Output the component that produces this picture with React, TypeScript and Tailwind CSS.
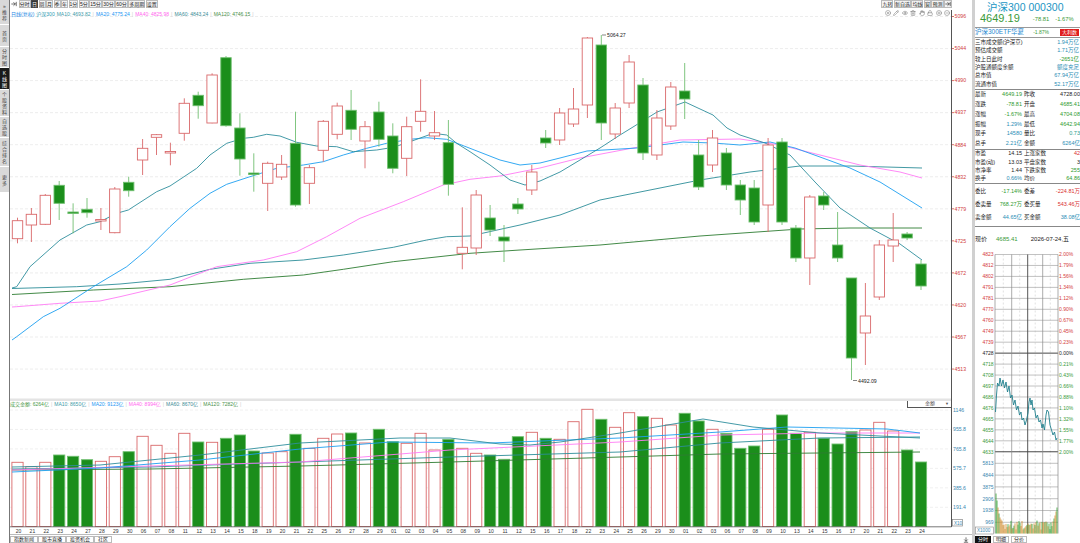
import { CircleX, Pencil, Eye, Trash2, Hand, Lock, CirclePlus, CircleMinus, ArrowRightToLine, ArrowUpToLine } from "lucide-react";

// [bodyTop, bodyBottom, high, low, up]
type Candle = [number, number, number, number, number];

const CANDLES: Candle[] = [
  [220.7, 238.7, 217.7, 243.3, 1], [214.3, 225, 208, 242, 1], [195.3, 224.3, 194, 225, 1],
  [185.3, 203.3, 181, 220, 0], [212, 213.5, 203.3, 233.3, 0], [209.3, 212.7, 198, 217.7, 0],
  [219.5, 221, 208, 230, 1], [189, 232.7, 187, 233.3, 1], [182.3, 190.7, 176.7, 196.7, 0],
  [148.3, 160, 139, 175, 1], [134.7, 137.3, 134, 155, 1], [151.5, 153, 142.7, 165.3, 1],
  [103.3, 133.3, 98.3, 140.7, 1], [95.3, 105.7, 91.7, 118.7, 0], [75, 123, 73.3, 123.3, 1],
  [57.7, 125.7, 56, 126.7, 0], [128, 159, 113.3, 175.7, 0], [173, 174.5, 153.3, 191.7, 0],
  [163.3, 183.3, 161.7, 211, 1], [164.3, 177, 155, 180, 1], [143.3, 205, 111.7, 206.7, 0],
  [167.7, 183.3, 165, 204, 1], [121.3, 150.3, 120, 161.7, 1], [106, 134.3, 102.7, 139.3, 1],
  [110.3, 129.3, 90, 140, 0], [126.7, 141, 121, 168.3, 1], [112, 139.3, 101.7, 146.7, 0],
  [136, 168.3, 123.3, 173.3, 0], [126.7, 158.3, 116.7, 176, 1], [111.3, 121.3, 79.3, 131.7, 1],
  [132.7, 136, 111, 140, 1], [142.7, 184.3, 120, 195.7, 0], [247.3, 253.3, 207.3, 269.3, 1],
  [195, 248, 190, 255, 1], [218, 230, 205, 236, 0], [237, 241, 225, 262, 0],
  [204, 209, 198, 214, 0], [172, 190, 165, 195, 1], [138, 143, 130, 148, 0],
  [113, 140, 108, 145, 1], [109, 124, 88, 127, 1], [38, 105, 37, 118, 1],
  [45, 123, 35, 140, 0], [108, 134, 103, 139, 1], [62, 103, 55, 108, 1],
  [85, 153, 78, 160, 0], [118, 155, 110, 160, 1], [87, 126, 82, 130, 1],
  [91, 99, 63, 119, 0], [155, 187, 140, 190, 0], [138, 165, 130, 172, 1],
  [153, 185, 148, 190, 0], [185, 200, 180, 215, 0], [188, 222, 180, 225, 0],
  [145, 205, 138, 232, 1], [142, 222, 138, 225, 0], [228, 258, 225, 262, 0],
  [197, 258, 195, 285, 1], [196, 205, 192, 210, 0], [245, 258, 212, 262, 0],
  [278, 358, 278, 380, 0], [316, 333, 283, 365, 1], [245, 297, 240, 300, 1],
  [240, 246, 213, 262, 1], [234, 238, 232, 240, 0], [264, 286, 260, 290, 0],
];

const VOL = [
  462.3, 466.7, 462.3, 455, 456.3, 459.7, 461.3, 456.7, 451.7, 436.3,
  445.3, 453.3, 433.3, 442, 442.3, 438.3, 435, 451, 453, 451.7,
  434.3, 448.3, 438.3, 434, 433, 443, 429.3, 441.7, 443.3, 433.3,
  450, 439.3, 448.3, 453.3, 455, 459.3, 436.7, 432.3, 438.3, 439.3,
  421.7, 409.3, 419.3, 427.3, 412.7, 416.7, 418.3, 425, 413.3, 421,
  429.3, 433.3, 448.3, 446, 429.3, 415, 433.3, 432.3, 438.3, 444,
  431.7, 430, 422.3, 431, 450, 462,
];

const DATES =
  "20 21 22 23 24 27 28 29 30 06 07 08 11 12 13 14 15 18 19 20 21 22 25 26 27 28 29 01 02 03 04 05 08 09 10 11 12 15 16 17 18 22 23 24 25 26 29 30 01 02 03 06 07 08 09 10 13 14 15 16 17 20 21 22 23 24".split(" ");

const PRICES = ["5096", "5044", "4990", "4937", "4884", "4832", "4779", "4725", "4672", "4620", "4567", "4513"];
const VOL_AXIS = ["1146", "955.8", "765.8", "575.7", "385.6", "191.4"];

const MA10 = [[12,288],[16.7,286.7],[30,266.7],[60,240],[86.7,225],[100,221.7],[116.7,213.3],[128.3,210],[156.7,191.7],[170,186],[196.7,168.3],[210,155],[226.7,143.3],[243.3,138.3],[253.3,137.3],[266.7,134.3],[280,136],[296.7,142.3],[316.7,146],[336.7,146.7],[353.3,151.7],[376.7,150],[393.3,147.3],[410,141.7],[433.3,133.3],[446.7,135],[456.7,143.3],[470,151.7],[490,165],[510,180],[525,185],[540,181],[560,172],[580,160],[600,148],[620,135],[633,127],[657,112],[685,102],[713,115],[727,128],[740,135],[765,143],[790,155],[815,182],[840,208],[870,228],[900,244],[922,260]];
const MA20 = [[12,340],[16.7,336.7],[43.3,316.7],[60,308.3],[93.3,286.7],[126.7,266.7],[146.7,250],[170,226.7],[190,208.3],[210,193.3],[226.7,184.3],[250,176.7],[276.7,168.3],[303.3,165],[323.3,161.7],[343.3,155],[366.7,148.3],[386.7,143.3],[410,139.3],[426.7,137.7],[446.7,139.3],[470,148.3],[500,160],[520,165],[540,163],[560,158],[587,151],[637,148],[683,142],[713,143],[740,145],[770,142],[795,148],[820,157],[850,168],[880,182],[922,208]];
const MA40 = [[12,307],[16.7,306.7],[60,303.3],[100,301],[120,296.7],[170,285],[216.7,266.7],[263.3,260],[296.7,251.7],[326.7,236.7],[360,218.3],[403.3,201.7],[443.3,185],[470,179.3],[500,176],[540,168],[580,158],[633,148],[680,140],[740,139],[780,145],[820,155],[860,165],[900,172],[922,178]];
const MA60 = [[12,288.5],[76.7,286.7],[120,284],[170,279.3],[210,269.3],[250,263.3],[303.3,260],[343.3,255],[393.3,247.3],[426.7,240],[446.7,236.7],[470,236],[520,225],[560,215],[600,200],[650,190],[700,180],[750,172],[800,166],[850,166],[922,168]];
const MA120 = [[12,294.5],[93.3,290],[170,286.7],[243.3,279.3],[303.3,275],[343.3,269.3],[393.3,261.7],[470,253.3],[520,250],[600,245],[700,236],[800,229],[850,228],[922,228]];

const VMA10 = [[12,467],[100,465],[200,455],[300,443],[400,438],[450,438],[500,444],[530,445],[560,442],[620,433],[703,419],[753,427],[820,433],[920,438]];
const VMA20 = [[12,472],[100,468],[200,460],[300,449],[390,442],[490,443],[620,438],[720,432],[787,427],[887,429],[920,433]];
const VMA40 = [[12,470],[150,466],[300,462],[450,450],[620,442],[720,435],[820,433],[920,433]];
const VMA60 = [[12,469],[150,467],[300,462],[450,457],[620,452],[720,443],[820,438],[920,437]];
const VMA120 = [[12,470],[150,469],[300,466],[450,462],[620,457],[720,454],[920,452]];

const MINI_LINE = [[995.5,412],[996.5,395],[997.5,383],[999,386],[1000,378],[1001.5,386],[1003,380],[1004.5,388],[1006,382],[1007.5,392],[1009,386],[1010.5,398],[1012,395],[1013.5,405],[1015,400],[1016.5,410],[1018,406],[1019.5,415],[1021,412],[1022,420],[1023.5,418],[1025,425],[1026.5,420],[1028,413],[1029,402],[1030,398],[1031,405],[1032,400],[1033,410],[1034.5,408],[1036,418],[1037.5,415],[1039,422],[1040.5,420],[1042,428],[1043,424],[1044.5,430],[1046,415],[1047,410],[1048.5,412],[1050,425],[1051.5,430],[1053,435],[1054.5,432],[1056,440],[1057,438]];

const MINI_L = ["4823","4812","4802","4791","4781","4770","4760","4749","4739","4728","4718","4708","4697","4686","4676","4665","4655","4644","4633"];
const MINI_R = ["2.00%","1.79%","1.56%","1.34%","1.12%","0.90%","0.67%","0.45%","0.23%","0.00%","0.21%","0.43%","0.66%","0.88%","1.10%","1.32%","1.55%","1.77%","2.00%"];
const MINI_V = ["5813", "4844", "3875", "2906", "1938", "969"];

const rnd = (i: number) => {
  const v = Math.sin(i * 91.17 + 7.3) * 10000;
  return v - Math.floor(v);
};

const MINI_VOL = Array.from({ length: 62 }, (_, i) => {
  let h: number;
  if (i < 6) h = [40, 33, 26, 20, 16, 14][i];
  else if (i > 56) h = [12, 15, 18, 22, 26][i - 57];
  else h = 4 + rnd(i) * 9;
  return { x: 996 + i, h, c: rnd(i + 100) > 0.5 ? "#2f9e2f" : "#d18b2c" };
});

const bx = (i: number) => 17.5 + i * 13.9;
const pts = (p: number[][]) => p.map((q) => q.join(",")).join(" ");

const RED = "#d9686a";
const GREEN = "#1b8e1b";

function Tab({ t, on }: { t: string; on?: boolean }) {
  return (
    <span
      className={
        on
          ? "flex h-[8px] items-center border border-[#444] bg-[#333] text-white"
          : "flex h-[8px] items-center border border-[#bbb] bg-[#f3f3f3] text-[#222]"
      }
    >
      {t}
    </span>
  );
}

const SIDE = [
  { t: "推荐", h: 25, pre: true },
  { t: "首页", h: 22 },
  { t: "分时图", h: 21 },
  { t: "K线图", h: 22, on: true },
  { t: "个股资料", h: 27 },
  { t: "自选股", h: 21 },
  { t: "综合排名", h: 29 },
  { t: "更多", h: 26 },
];

function Sidebar() {
  return (
    <div className="flex w-[10px] shrink-0 flex-col border-r border-[#777]">
      {SIDE.map((s) => (
        <div
          key={s.t}
          style={{ height: s.h }}
          className={
            s.on
              ? "flex flex-col items-center justify-center border-b border-white bg-[#1a1a1a] text-[5px] leading-[6px] text-white"
              : "flex flex-col items-center justify-center border-b border-white bg-[#d9d9d9] text-[5px] leading-[6px] text-[#444]"
          }
        >
          {s.pre && <span className="leading-[5px]">»</span>}
          {s.t.split("").map((c, i) => (
            <span key={i}>{c}</span>
          ))}
        </div>
      ))}
      <div className="flex-1 bg-white" />
    </div>
  );
}

function Sep() {
  return <span className="text-[#ccc]">|</span>;
}

function MainChart() {
  const grid = PRICES.map((_, k) => 16.5 + k * 32.05);
  const vgrid = VOL_AXIS.map((_, k) => 410 + k * 19.45);
  return (
    <svg width={962} height={526} viewBox="10 10 962 526" className="block">
      {grid.map((y) => (
        <line key={y} x1={10} x2={951} y1={y} y2={y} stroke="#e9e9e9" strokeDasharray="3 2" strokeWidth={0.8} />
      ))}
      {vgrid.map((y) => (
        <line key={y} x1={10} x2={951} y1={y} y2={y} stroke="#ececec" strokeDasharray="3 2" strokeWidth={0.8} />
      ))}
      {/* price axis */}
      {PRICES.map((p, k) => (
        <g key={p}>
          <line x1={951} x2={954} y1={grid[k]} y2={grid[k]} stroke="#d04848" strokeWidth={0.8} />
          <text x={954.5} y={grid[k] + 1.8} fontSize={5.2} fill="#d03c3c">
            {p}
          </text>
        </g>
      ))}
      {VOL_AXIS.map((p, k) => (
        <text key={p} x={953} y={vgrid[k] + 1.8} fontSize={5.2} fill="#3a88b0">
          {p}
        </text>
      ))}
      <rect x={952.5} y={519.5} width={10} height={6.5} fill="#fff" stroke="#888" strokeWidth={0.7} />
      <text x={954} y={524.5} fontSize={4.6} fill="#3a88b0">
        X10
      </text>

      {/* moving averages */}
      <polyline points={pts(MA60)} fill="none" stroke="#2d8d98" strokeWidth={0.9} />
      <polyline points={pts(MA120)} fill="none" stroke="#2e7d32" strokeWidth={0.9} />
      <polyline points={pts(MA40)} fill="none" stroke="#ff7cf5" strokeWidth={0.9} />
      <polyline points={pts(MA20)} fill="none" stroke="#1d9ff0" strokeWidth={0.9} />
      <polyline points={pts(MA10)} fill="none" stroke="#2f8f9d" strokeWidth={0.9} />

      {/* candles */}
      {CANDLES.map(([t, b, h, l, up], i) => {
        const x = bx(i);
        return (
          <g key={i}>
            <line x1={x} x2={x} y1={h} y2={l} stroke={up ? RED : "#72c072"} strokeWidth={0.9} />
            <rect
              x={x - 5.2}
              y={t}
              width={10.4}
              height={Math.max(b - t, 1.4)}
              fill={up ? "#fff" : GREEN}
              stroke={up ? RED : "#6fbf6f"}
              strokeWidth={0.9}
            />
          </g>
        );
      })}

      {/* extremes */}
      <line x1={602} x2={606} y1={35} y2={35} stroke="#333" strokeWidth={0.6} />
      <text x={607} y={37} fontSize={5.2} fill="#222">
        5064.27
      </text>
      <line x1={853} x2={857} y1={380.5} y2={380.5} stroke="#333" strokeWidth={0.6} />
      <text x={858} y={382.5} fontSize={5.2} fill="#222">
        4492.09
      </text>

      {/* divider between panes */}
      <rect x={10} y={398.5} width={941} height={2.5} fill="#e4e4e4" />

      {/* volume bars */}
      {VOL.map((top, i) => {
        const up = CANDLES[i][4];
        const x = bx(i);
        return (
          <rect
            key={i}
            x={x - 5.6}
            y={top}
            width={11.2}
            height={526.5 - top}
            fill={up ? "#fff" : GREEN}
            stroke={up ? RED : "#6fbf6f"}
            strokeWidth={0.9}
          />
        );
      })}
      <polyline points={pts(VMA120)} fill="none" stroke="#2e7d32" strokeWidth={0.9} />
      <polyline points={pts(VMA60)} fill="none" stroke="#2d8d98" strokeWidth={0.9} />
      <polyline points={pts(VMA40)} fill="none" stroke="#ff7cf5" strokeWidth={0.9} />
      <polyline points={pts(VMA20)} fill="none" stroke="#1d9ff0" strokeWidth={0.9} />
      <polyline points={pts(VMA10)} fill="none" stroke="#2f8f9d" strokeWidth={0.9} />

      {/* frame */}
      <line x1={951.5} x2={951.5} y1={10} y2={527} stroke="#555" strokeWidth={1} />
      <line x1={10} x2={951.5} y1={526.8} y2={526.8} stroke="#555" strokeWidth={0.8} />
      <line x1={10} x2={972} y1={534.5} y2={534.5} stroke="#bbb" strokeWidth={1} />

      {/* dates */}
      {DATES.map((d, i) => (
        <text key={i} x={bx(i) + 1} y={532.8} fontSize={5} fill="#333" textAnchor="middle">
          {d}
        </text>
      ))}
    </svg>
  );
}

function MiniChart() {
  const gy = MINI_L.map((_, k) => 254.5 + k * 10.96);
  const vy = MINI_V.map((_, k) => 463.3 + k * 11.8);
  const vx = [995, 1011.7, 1027.7, 1042.7, 1058];
  const minor = [1003.3, 1019.7, 1035.2, 1050.3];
  return (
    <svg width={105} height={284} viewBox="975 251 105 284" className="block">
      {minor.map((x) => (
        <line key={x} x1={x} x2={x} y1={254.5} y2={533.5} stroke="#ccc" strokeDasharray="2 2" strokeWidth={0.6} />
      ))}
      {gy.map((y, k) => (
        <line
          key={y}
          x1={995}
          x2={1058}
          y1={y}
          y2={y}
          stroke={k === 9 || k === 18 ? "#333" : "#a8a8a8"}
          strokeWidth={k === 9 || k === 18 ? 0.9 : 0.7}
        />
      ))}
      {vy.map((y) => (
        <line key={y} x1={995} x2={1058} y1={y} y2={y} stroke="#a8a8a8" strokeWidth={0.7} />
      ))}
      {vx.map((x, k) => (
        <line key={x} x1={x} x2={x} y1={254.5} y2={533.5} stroke={k === 2 ? "#444" : "#888"} strokeWidth={k === 2 ? 0.9 : 0.7} />
      ))}
      {MINI_L.map((p, k) => (
        <text
          key={k}
          x={993.5}
          y={gy[k] + 1.8}
          fontSize={5}
          textAnchor="end"
          fill={k < 9 ? "#d43c3c" : k === 9 ? "#222" : "#3a9a3a"}
        >
          {p}
        </text>
      ))}
      {MINI_R.map((p, k) => (
        <text key={k} x={1059} y={gy[k] + 1.8} fontSize={5} fill={k < 9 ? "#d43c3c" : k === 9 ? "#222" : "#3a9a3a"}>
          {p}
        </text>
      ))}
      {MINI_V.map((p, k) => (
        <text key={p} x={993.5} y={vy[k] + 1.8} fontSize={5} textAnchor="end" fill="#3a88b0">
          {p}
        </text>
      ))}
      <rect x={975.5} y={527} width={18} height={7} fill="#fff" stroke="#888" strokeWidth={0.6} />
      <text x={977} y={532.3} fontSize={4.6} fill="#3a88b0">
        X1000
      </text>
      {MINI_VOL.map((v) => (
        <line key={v.x} x1={v.x} x2={v.x} y1={533.5 - v.h} y2={533.5} stroke={v.c} strokeWidth={0.8} />
      ))}
      <polyline points={pts(MINI_LINE)} fill="none" stroke="#1f7f8c" strokeWidth={0.9} />
    </svg>
  );
}

type Cell = [string, string, string];

function Pair({ l, r, h }: { l: Cell; r: Cell; h: string }) {
  return (
    <div className={`flex ${h} items-center`}>
      <div className="flex w-[50px] justify-between">
        <span className="text-[#222]">{l[0]}</span>
        <span style={{ color: l[2] }}>{l[1]}</span>
      </div>
      <div className="flex w-[58px] shrink-0 justify-between pl-[2px]">
        <span className="text-[#222]">{r[0]}</span>
        <span style={{ color: r[2] }}>{r[1]}</span>
      </div>
    </div>
  );
}

const G = "#2e9a2e";
const R = "#d93030";
const B = "#2a8db5";
const K = "#222";

const INFO: [string, string, string][] = [
  ["三市成交额(沪深京)", "1.94万亿", B],
  ["预估成交额", "1.71万亿", B],
  ["较上日此时", "-2651亿", G],
  ["沪股通额度余额", "额度充足", B],
  ["总市值", "67.94万亿", B],
  ["流通市值", "52.17万亿", B],
];

const Q1: [Cell, Cell][] = [
  [["最新", "4649.19", G], ["昨收", "4728.00", K]],
  [["涨跌", "-78.81", G], ["开盘", "4685.41", G]],
  [["涨幅", "-1.67%", G], ["最高", "4704.08", G]],
  [["振幅", "1.29%", B], ["最低", "4642.94", G]],
  [["现手", "14580", B], ["量比", "0.73", "#2a9a8a"]],
  [["总手", "2.21亿", B], ["金额", "6264亿", B]],
];

const Q2: [Cell, Cell][] = [
  [["市盈", "14.15", K], ["上涨家数", "42", R]],
  [["市盈(动)", "13.03", K], ["平盘家数", "3", K]],
  [["市净率", "1.44", K], ["下跌家数", "255", G]],
  [["换手", "0.66%", B], ["均价", "64.86", G]],
];

const Q3: [Cell, Cell][] = [
  [["委比", "-17.14%", G], ["委差", "-224.81万", R]],
  [["委卖量", "768.27万", G], ["委买量", "543.46万", R]],
  [["卖金额", "44.65亿", B], ["买金额", "38.08亿", B]],
];

function RightPanel() {
  return (
    <div className="flex w-[108px] shrink-0 flex-col overflow-hidden border-l-[3px] border-[#d0d0d0] text-[5.5px] leading-none">
      <div className="flex h-[28px] flex-col border-b border-[#999]">
        <div className="h-[13px] pl-[12px] pt-[2px] text-[10.5px] text-[#2196c4]">沪深300 000300</div>
        <div className="flex items-end pl-[5px]">
          <span className="text-[11px] text-[#3a9a3a]">4649.19</span>
          <span className="ml-[13px] pb-[1px] text-[5.8px] text-[#3a9a3a]">-78.81</span>
          <span className="ml-[6px] pb-[1px] text-[5.8px] text-[#3a9a3a]">-1.67%</span>
        </div>
      </div>
      <div className="flex h-[10px] items-center border-b border-[#999]">
        <span className="text-[6.5px] text-[#1e88d0]">沪深300ETF华夏</span>
        <span className="ml-[9px] text-[5px] text-[#3a9a3a]">-1.87%</span>
        <span className="ml-auto mr-[1px] bg-[#e01e1e] px-[2px] py-[1px] text-[5px] text-white">大利数</span>
      </div>
      <div className="flex h-[52px] flex-col justify-center border-b border-[#888]">
        {INFO.map(([a, v, c]) => (
          <div key={a} className="flex h-[8.4px] items-center justify-between pr-[1px]">
            <span className="text-[#222]">{a}</span>
            <span style={{ color: c }}>{v}</span>
          </div>
        ))}
      </div>
      <div className="flex h-[60px] flex-col border-b border-[#888]">
        {Q1.map(([l, r]) => (
          <Pair key={l[0]} l={l} r={r} h="h-[9.8px]" />
        ))}
      </div>
      <div className="flex h-[34px] flex-col justify-center border-b border-[#888]">
        {Q2.map(([l, r]) => (
          <Pair key={l[0]} l={l} r={r} h="h-[8.3px]" />
        ))}
      </div>
      <div className="flex h-[43px] flex-col justify-center border-b border-[#888]">
        {Q3.map(([l, r]) => (
          <Pair key={l[0]} l={l} r={r} h="h-[13px]" />
        ))}
      </div>
      <div className="flex h-[24px] items-center text-[6px]">
        <span className="text-[#222]">现价</span>
        <span className="ml-[9px] text-[#3a9a3a]">4685.41</span>
        <span className="ml-[13px] whitespace-nowrap text-[#222]">2026-07-24,五</span>
      </div>
      <div className="h-[284px]">
        <MiniChart />
      </div>
      <div className="flex h-[8px] items-center gap-[2px] text-[5px]">
        <span className="flex h-[7px] items-center bg-[#111] px-[3px] text-white">分时</span>
        <span className="flex h-[7px] items-center border border-[#bbb] px-[2px] text-[#222]">明细</span>
        <span className="flex h-[7px] items-center border border-[#bbb] px-[2px] text-[#222]">分价</span>
      </div>
    </div>
  );
}

export default function App() {
  const left = ["日", "周", "月", "季", "年", "1分", "5分", "15分", "30分", "60分", "多周期", "设置"];
  const right = ["九转", "新自选", "均线", "窗", "预测"];
  return (
    <div className="flex h-[543px] w-[1080px] overflow-hidden bg-white font-['Liberation_Sans','Noto_Sans_CJK_SC',sans-serif]">
      <Sidebar />
      <div className="flex w-[962px] shrink-0 flex-col">
        <div className="flex h-[10px] items-start justify-between pr-[20px] text-[5px] leading-none">
          <div className="flex items-center gap-[0.5px]">
            <ArrowRightToLine size={6} strokeWidth={2.5} className="mx-[1px] text-[#222]" />
            <Tab t="分时" />
            {left.map((t) => (
              <Tab key={t} t={t} on={t === "日"} />
            ))}
          </div>
          <div className="flex items-center gap-[0.5px]">
            {right.map((t) => (
              <Tab key={t} t={t} />
            ))}
            <span className="flex h-[8px] items-center border border-[#bbb] bg-[#f3f3f3]">
              <ArrowRightToLine size={6} strokeWidth={2.5} className="text-[#222]" />
            </span>
          </div>
        </div>
        <div className="relative h-[526px]">
          <MainChart />
          <div className="absolute left-[1px] top-[1px] flex gap-[2px] text-[5px] leading-[6px]">
            <span className="text-[#1e88e5]">日线(复权)</span>
            <span className="text-[#2a9ab0]">沪深300</span>
            <span className="text-[#3d9aa8]">MA10: 4693.82</span>
            <Sep />
            <span className="text-[#2196f3]">MA20: 4775.24</span>
            <Sep />
            <span className="text-[#ff66ee]">MA40: 4825.98</span>
            <Sep />
            <span className="text-[#3b8b95]">MA60: 4843.24</span>
            <Sep />
            <span className="text-[#4a8f4a]">MA120: 4746.15</span>
            <Sep />
          </div>
          <div className="absolute right-[22px] top-[0px] flex gap-[2.5px] text-[#777]">
            <CircleX size={6} strokeWidth={2} />
            <Pencil size={6} strokeWidth={2} />
            <Eye size={6} strokeWidth={2} />
            <Trash2 size={6} strokeWidth={2} />
            <Hand size={6} strokeWidth={2} />
            <Lock size={6} strokeWidth={2} />
            <CirclePlus size={6} strokeWidth={2} />
            <CircleMinus size={6} strokeWidth={2} />
          </div>
          <div className="absolute left-[0px] top-[391px] flex gap-[2px] text-[5px] leading-[6px]">
            <span className="text-[#4a9a4a]">成交金额: 6264亿</span>
            <Sep />
            <span className="text-[#3d9aa8]">MA10: 8650亿</span>
            <Sep />
            <span className="text-[#2196f3]">MA20: 9123亿</span>
            <Sep />
            <span className="text-[#ff66ee]">MA40: 8994亿</span>
            <Sep />
            <span className="text-[#3b8b95]">MA60: 8670亿</span>
            <Sep />
            <span className="text-[#4a8f4a]">MA120: 7282亿</span>
            <Sep />
          </div>
          <div className="absolute left-[897px] top-[391px] flex h-[7px] w-[44px] items-center justify-between border-b border-l border-[#555] bg-white pl-[17px] pr-[2px] text-[5px] text-[#555]">
            <span>金额</span>
            <span className="text-[4px]">▼</span>
          </div>
        </div>
        <div className="flex h-[7px] items-center justify-between pr-[3px] text-[5px] leading-none text-[#222]">
          <div className="flex h-[7px]">
            <span className="flex items-center border border-[#bbb] px-[3px]">指数新闻</span>
            <span className="flex items-center border border-[#bbb] px-[3px]">股市直播</span>
            <span className="flex items-center border border-[#bbb] px-[3px]">投资机会</span>
            <span className="flex items-center border border-[#bbb] px-[3px]">社区</span>
          </div>
          <ArrowUpToLine size={6} strokeWidth={2.5} className="rotate-180 text-[#222]" />
        </div>
      </div>
      <RightPanel />
    </div>
  );
}
